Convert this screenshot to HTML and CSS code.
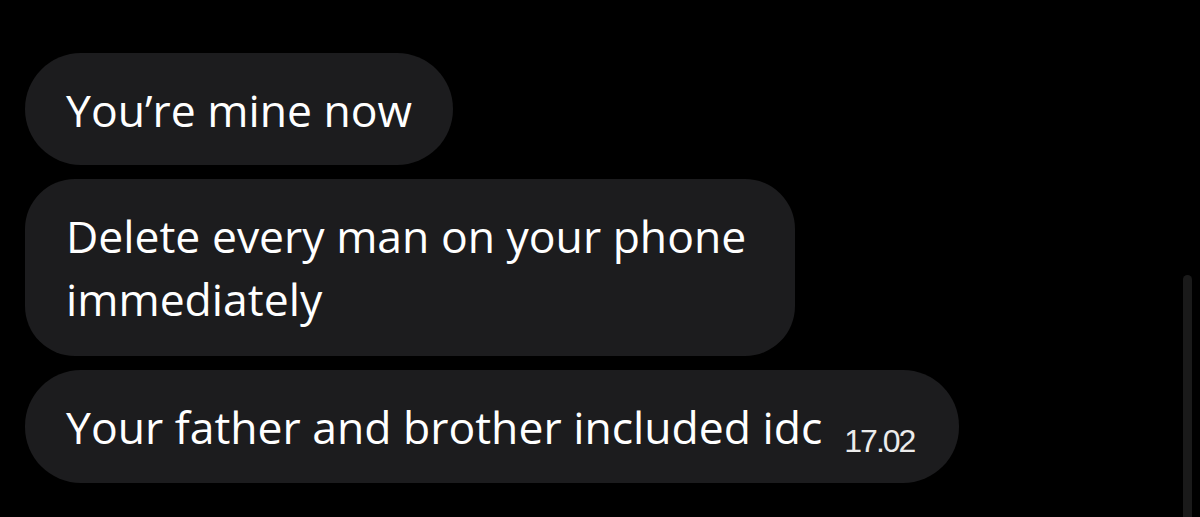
FILE: index.html
```html
<!DOCTYPE html>
<html lang="en">
<head>
<meta charset="utf-8">
<link rel="stylesheet" href="styles.css">
</head>
<body>
<div class="chat">
  <div class="bubble"><span class="text">You’re mine now</span></div>
  <div class="bubble bubble-wrap"><span class="text">Delete every man on your phone immediately</span></div>
  <div class="bubble bubble-last"><span class="text">Your father and brother included idc</span><span class="time">17.02</span></div>
</div>
<div class="scrollbar"></div>
</body>
</html>
```
FILE: styles.css
```css
html, body {
  margin: 0;
  padding: 0;
  background: #000;
  height: 517px;
  overflow: hidden;
}
body {
  position: relative;
  font-family: "Open Sans", "Noto Sans", sans-serif;
  color: #fff;
}
.chat {
  display: flex;
  flex-direction: column;
  align-items: flex-start;
  gap: 14px;
  padding: 53px 0 0 25px;
}
.bubble {
  background: #1c1c1e;
  border-radius: 56px;
  padding: 0 41px 0 41px;
  height: 112px;
  display: flex;
  align-items: center;
  box-sizing: border-box;
}
.bubble-last {
  height: 113px;
  padding-right: 45px;
}
.bubble-wrap {
  border-radius: 50px;
  height: auto;
  padding: 25px 30px 26px 41px;
  width: 770px;
}
.text {
  font-size: 44.5px;
  line-height: 63px;
}
.time {
  font-family: "Liberation Sans", Arial, sans-serif;
  font-size: 32px;
  line-height: 1;
  letter-spacing: -2px;
  color: #ececec;
  margin-left: 22px;
  align-self: flex-end;
  margin-bottom: 26px;
}
.scrollbar {
  position: absolute;
  left: 1183px;
  top: 275px;
  width: 9px;
  height: 260px;
  border-radius: 5px;
  background: #1a1a1a;
}
```
